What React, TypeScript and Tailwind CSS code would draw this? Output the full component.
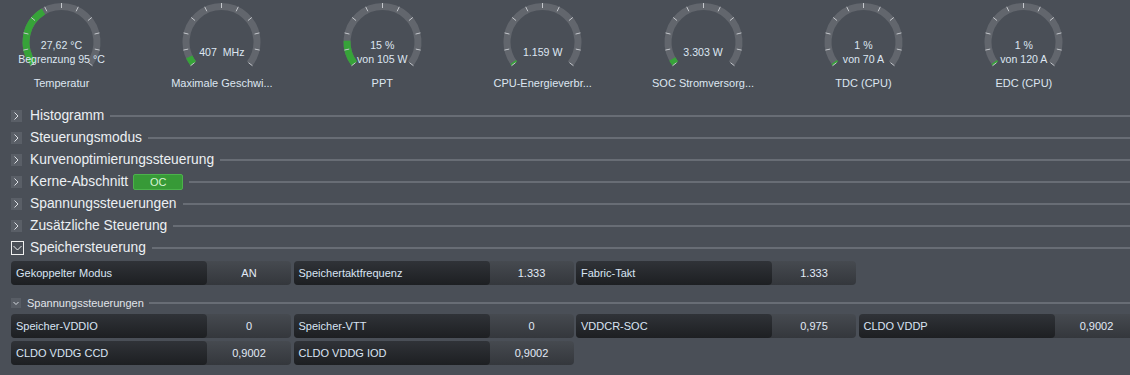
import React from "react";

const CX = 61.5;
const CY = 42;
const R = 35.5;
const A0 = 142.5;
const SWEEP = 255;

function polar(r: number, deg: number): [number, number] {
  const a = (deg * Math.PI) / 180;
  return [CX + r * Math.cos(a), CY + r * Math.sin(a)];
}

function arc(a0: number, a1: number, r: number) {
  const [x0, y0] = polar(r, a0);
  const [x1, y1] = polar(r, a1);
  const large = a1 - a0 > 180 ? 1 : 0;
  return `M ${x0.toFixed(2)} ${y0.toFixed(2)} A ${r} ${r} 0 ${large} 1 ${x1.toFixed(2)} ${y1.toFixed(2)}`;
}

type GaugeProps = { lines: string[]; label: string; f: number };

function Gauge({ lines, label, f }: GaugeProps) {
  const ticks = Array.from({ length: 11 }, (_, k) => A0 + k * (SWEEP / 10));
  return (
    <div className="relative w-[123px] shrink-0">
      <svg width="123" height="76" viewBox="0 0 123 76" className="block">
        <path d={arc(A0, A0 + SWEEP, R)} fill="none" stroke="#62666d" strokeWidth="7" />
        <path d={arc(A0, A0 + SWEEP * f, R)} fill="none" stroke="#37a339" strokeWidth="7" />
        {ticks.map((t, i) => {
          const [x0, y0] = polar(34, t);
          const [x1, y1] = polar(39, t);
          return (
            <line key={i} x1={x0} y1={y0} x2={x1} y2={y1} stroke="#c4c7cc" strokeWidth="1" />
          );
        })}
      </svg>
      <div className="absolute left-0 right-0 top-[38px] h-[28px] flex flex-col items-center justify-center text-[10.6px] leading-[14px] text-[#dde6f1] whitespace-pre">
        {lines.map((l, i) => (
          <div key={i}>{l}</div>
        ))}
      </div>
      <div className="text-center text-[11px] leading-[14px] text-[#dde6f1] whitespace-nowrap">{label}</div>
    </div>
  );
}

function ChevRightBox() {
  return (
    <div className="w-[11px] h-[12px] bg-[#5a5f67] shrink-0 flex items-center justify-center">
      <svg width="11" height="12" viewBox="0 0 11 12">
        <path d="M3.5 2.5 L7 6 L3.5 9.5" fill="none" stroke="#dcdfe4" strokeWidth="1" />
      </svg>
    </div>
  );
}

function Header({ title, open, badge }: { title: string; open?: boolean; badge?: string }) {
  return (
    <div className="h-[22px] flex items-center pl-[11px]">
      {open ? (
        <div className="w-[13px] h-[14px] border border-[#f0f0f0] shrink-0 flex items-center justify-center">
          <svg width="11" height="12" viewBox="0 0 11 12">
            <path d="M1.5 4 L5.5 8 L9.5 4" fill="none" stroke="#f0f0f0" strokeWidth="1" />
          </svg>
        </div>
      ) : (
        <ChevRightBox />
      )}
      <span className={`${open ? "ml-[6px]" : "ml-[8px]"} text-[13.8px] leading-[18px] text-[#eceff3] whitespace-nowrap`}>
        {title}
      </span>
      {badge && (
        <div className="ml-[5px] w-[50px] h-[16px] rounded-[2px] bg-[#379a37] border border-[#4cb24c] flex items-center justify-center text-[11px] text-[#d6f3d4]">
          {badge}
        </div>
      )}
      <div className="flex-1 ml-[6px] h-[2px] bg-[#686d75]" />
    </div>
  );
}

function Cell({ label, value }: { label: string; value: string }) {
  return (
    <div className="w-[280px] h-[24px] shrink-0 flex rounded-[4px] bg-gradient-to-b from-[#464a50] to-[#34373c]">
      <div className="w-[196px] h-full rounded-[4px] bg-gradient-to-b from-[#303338] to-[#1d1f22] flex items-center pl-[5px] text-[11px] text-[#d9e4f3] whitespace-nowrap">
        {label}
      </div>
      <div className="flex-1 flex items-center justify-center text-[11px] text-[#e2eaf6]">{value}</div>
    </div>
  );
}

export default function App() {
  const gauges: GaugeProps[] = [
    { lines: ["27,62 °C", "Begrenzung 95 °C"], label: "Temperatur", f: 0.38 },
    { lines: ["407  MHz"], label: "Maximale Geschwi...", f: 0.05 },
    { lines: ["15 %", "von 105 W"], label: "PPT", f: 0.155 },
    { lines: ["1.159 W"], label: "CPU-Energieverbr...", f: 0.012 },
    { lines: ["3.303 W"], label: "SOC Stromversorg...", f: 0.035 },
    { lines: ["1 %", "von 70 A"], label: "TDC (CPU)", f: 0.012 },
    { lines: ["1 %", "von 120 A"], label: "EDC (CPU)", f: 0.012 },
  ];
  return (
    <div
      className="w-[1130px] h-[375px] bg-[#4a4f57] overflow-hidden"
      style={{ fontFamily: '"Liberation Sans", Arial, sans-serif' }}
    >
      <div className="flex gap-[37.4px]">
        {gauges.map((g, i) => (
          <Gauge key={i} {...g} />
        ))}
      </div>
      <div className="pt-[15px]">
        <Header title="Histogramm" />
        <Header title="Steuerungsmodus" />
        <Header title="Kurvenoptimierungssteuerung" />
        <Header title="Kerne-Abschnitt" badge="OC" />
        <Header title="Spannungssteuerungen" />
        <Header title="Zusätzliche Steuerung" />
        <Header title="Speichersteuerung" open />
      </div>
      <div className="mt-[2px] pl-[11px] flex gap-[2.5px]">
        <Cell label="Gekoppelter Modus" value="AN" />
        <Cell label="Speichertaktfrequenz" value="1.333" />
        <Cell label="Fabric-Takt" value="1.333" />
      </div>
      <div className="mt-[9px] h-[18px] pl-[11px] flex items-center">
        <div className="w-[10px] h-[10px] bg-[#585d65] shrink-0 flex items-center justify-center">
          <svg width="10" height="10" viewBox="0 0 10 10">
            <path d="M2.5 4 L5 6.5 L7.5 4" fill="none" stroke="#d5d9df" strokeWidth="1" />
          </svg>
        </div>
        <span className="ml-[6px] text-[11px] text-[#e0e4ea] whitespace-nowrap">Spannungssteuerungen</span>
        <div className="flex-1 ml-[5px] h-[2px] bg-[#686d75]" />
      </div>
      <div className="mt-[2px] pl-[11px] flex gap-[2.5px]">
        <Cell label="Speicher-VDDIO" value="0" />
        <Cell label="Speicher-VTT" value="0" />
        <Cell label="VDDCR-SOC" value="0,975" />
        <Cell label="CLDO VDDP" value="0,9002" />
      </div>
      <div className="mt-[3px] pl-[11px] flex gap-[2.5px]">
        <Cell label="CLDO VDDG CCD" value="0,9002" />
        <Cell label="CLDO VDDG IOD" value="0,9002" />
      </div>
    </div>
  );
}
